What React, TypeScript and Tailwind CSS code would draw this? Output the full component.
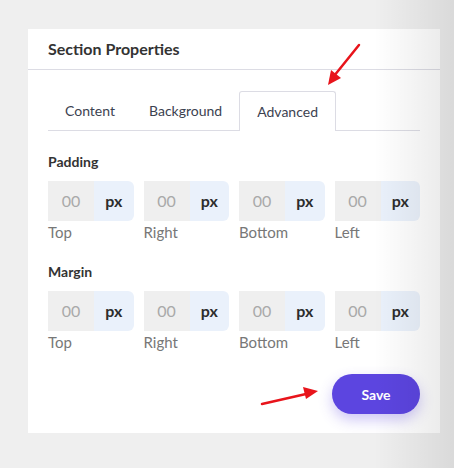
import React from 'react'

const sides = ['Top', 'Right', 'Bottom', 'Left']

const SpacingGroup = ({ title }: { title: string }) => {
  return (
    <div>
      <div className="text-[14px] font-bold text-[#333] leading-[20px]">{title}</div>
      <div className="mt-[9px] grid grid-cols-4 gap-x-[10px]">
        {sides.map((side) => (
          <div key={side}>
            <div className="flex h-[40px]">
              <div className="w-[46px] bg-[#efefef] flex items-center justify-center text-[16px] text-[#a9a9a9]">00</div>
              <div className="flex-1 bg-[#eaf1fb] rounded-r-[6px] flex items-center justify-center text-[16px] font-bold text-[#2d2d2d]">
                px
              </div>
            </div>
            <div className="text-[15px] text-[#777] leading-[22px]">{side}</div>
          </div>
        ))}
      </div>
    </div>
  )
}

const App = () => {
  return (
    <div className="relative w-[454px] h-[468px] bg-[#efefef] overflow-hidden" style={{ fontFamily: 'Lato, "Open Sans", sans-serif' }}>
      <div className="pt-[29px] pl-[28px]">
        <div className="w-[412px] h-[404px] bg-white">
          <div className="h-[41px] border-b border-[#dcdce4] pl-[20px] flex items-center">
            <span className="text-[16px] font-bold text-[#333]">Section Properties</span>
          </div>
          <div className="px-[20px]">
            <div className="mt-[21px] flex items-end border-b border-[#dcdce4] h-[40px]">
              <div className="px-[17px] h-[39px] flex items-center text-[14px] text-[#3c4250]">Content</div>
              <div className="px-[17px] h-[39px] flex items-center text-[14px] text-[#3c4250]">Background</div>
              <div className="-mb-px px-[17px] h-[40px] flex items-center text-[14px] text-[#3c4250] bg-white border border-b-0 border-[#dcdce4] rounded-t-[3px]">
                Advanced
              </div>
            </div>
            <div className="mt-[21px]">
              <SpacingGroup title="Padding" />
            </div>
            <div className="mt-[19px]">
              <SpacingGroup title="Margin" />
            </div>
            <div className="mt-[21px] flex justify-end">
              <button className="w-[88px] h-[40px] rounded-full bg-[#5c45e0] text-white text-[14px] font-bold shadow-[0_6px_14px_rgba(92,69,224,0.3)]">
                Save
              </button>
            </div>
          </div>
        </div>
      </div>
      <div className="pointer-events-none absolute inset-y-0 right-0 w-[80px] bg-gradient-to-r from-transparent to-[rgba(0,0,0,0.09)]" />
      <svg className="absolute left-0 top-0" width="454" height="468" viewBox="0 0 454 468">
        <line x1="359" y1="45" x2="334" y2="76" stroke="#e8141b" strokeWidth="2.5" strokeLinecap="round" />
        <polygon points="328,85 331,70 341,78" fill="#e8141b" />
        <line x1="262" y1="404" x2="306" y2="394" stroke="#e8141b" strokeWidth="2.5" strokeLinecap="round" />
        <polygon points="318,391 303,387 306,399" fill="#e8141b" />
      </svg>
    </div>
  )
}

export default App
